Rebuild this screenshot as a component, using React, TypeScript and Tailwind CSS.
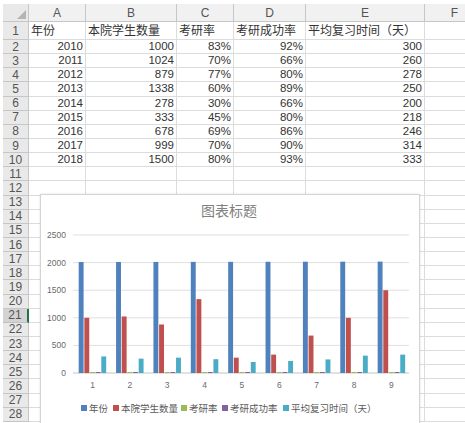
import React from "react";

type Row = [string, string, string, string, string];

const FONT = '"Liberation Sans", "Noto Sans CJK SC", sans-serif';

const header: Row = ["年份", "本院学生数量", "考研率", "考研成功率", "平均复习时间（天）"];

const data: Row[] = [
  ["2010", "1000", "83%", "92%", "300"],
  ["2011", "1024", "70%", "66%", "260"],
  ["2012", "879", "77%", "80%", "278"],
  ["2013", "1338", "60%", "89%", "250"],
  ["2014", "278", "30%", "66%", "200"],
  ["2015", "333", "45%", "80%", "218"],
  ["2016", "678", "69%", "86%", "246"],
  ["2017", "999", "70%", "90%", "314"],
  ["2018", "1500", "80%", "93%", "333"],
];

const columns = [
  { label: "A", cls: "w-[57px]" },
  { label: "B", cls: "w-[91px]" },
  { label: "C", cls: "w-[57px]" },
  { label: "D", cls: "w-[72px]" },
  { label: "E", cls: "w-[119px]" },
  { label: "F", cls: "w-[60px]" },
];

const seriesColors = ["#4f81bd", "#c0504d", "#9bbb59", "#8064a2", "#4bacc6"];

const legend = [
  { x: 81, label: "年份" },
  { x: 113, label: "本院学生数量" },
  { x: 181, label: "考研率" },
  { x: 222, label: "考研成功率" },
  { x: 283, label: "平均复习时间（天）" },
];

function RowHead({ n, active }: { n: number; active?: boolean }) {
  return (
    <div
      className={`flex w-[26px] shrink-0 items-center justify-center border-b border-r text-[12px] text-[#555] ${
        active
          ? "border-r-2 border-b-[#c0c0c0] border-r-[#217346] bg-[#d3d3d3]"
          : "border-[#c6c6c6] bg-[#e9e9e9]"
      }`}
    >
      {n}
    </div>
  );
}

function Chart() {
  const y0 = 373;
  const k = 138 / 2500;
  const ticks = [0, 500, 1000, 1500, 2000, 2500];

  return (
    <div className="absolute left-[40px] top-[194px] h-[232px] w-[380px] border border-[#d4d4d4] bg-white shadow-[0_0_2px_rgba(0,0,0,0.12)]">
      <svg width={378} height={230} viewBox="41 195 378 230" style={{ fontFamily: FONT }}>
        <text x={229} y={216} textAnchor="middle" fontSize={14} fill="#808080">
          图表标题
        </text>

        {ticks.map((t) => {
          const y = y0 - t * k;
          return (
            <g key={t}>
              <line x1={73} x2={409} y1={y} y2={y} stroke={t === 0 ? "#c4c4c4" : "#e0e0e0"} strokeWidth={1} />
              <text x={66} y={y + 3} textAnchor="end" fontSize={8.5} fill="#6a6a6a">
                {t}
              </text>
            </g>
          );
        })}

        {data.map((r, i) => {
          const values = [
            Number(r[0]),
            Number(r[1]),
            parseFloat(r[2]) / 100,
            parseFloat(r[3]) / 100,
            Number(r[4]),
          ];
          const left = 78.7 + i * 37.37;
          return (
            <g key={i}>
              {values.map((v, s) => {
                const h = Math.max(v * k, 1);
                return (
                  <rect
                    key={s}
                    x={left + s * 5.65}
                    y={y0 - h}
                    width={4.9}
                    height={h}
                    fill={seriesColors[s]}
                  />
                );
              })}
              <text x={left + 13.8} y={388} textAnchor="middle" fontSize={8.5} fill="#6a6a6a">
                {i + 1}
              </text>
            </g>
          );
        })}

        {legend.map((l, s) => (
          <g key={l.label}>
            <rect x={l.x} y={405} width={6} height={6} fill={seriesColors[s]} />
            <text x={l.x + 8} y={412} fontSize={9.5} fill="#5a5a5a">
              {l.label}
            </text>
          </g>
        ))}
      </svg>
    </div>
  );
}

export default function App() {
  const rows: (Row | null)[] = [header, ...data];
  while (rows.length < 28) rows.push(null);

  return (
    <div
      className="relative h-[423px] w-[465px] overflow-hidden bg-white pl-[3px] pt-[4px] text-[#333]"
      style={{ fontFamily: FONT }}
    >
      <div className="flex h-[18px]">
        <div className="relative w-[26px] shrink-0 border-b border-r border-[#c6c6c6] bg-[#e9e9e9]">
          <div className="absolute bottom-[2px] right-[2px] h-0 w-0 border-b-[9px] border-l-[9px] border-b-[#b4b4b4] border-l-transparent" />
        </div>
        {columns.map((c) => (
          <div
            key={c.label}
            className={`${c.cls} flex shrink-0 items-center justify-center border-b border-r border-[#c6c6c6] bg-[#f1f1f1] text-[12px] text-[#555]`}
          >
            {c.label}
          </div>
        ))}
      </div>

      {rows.map((r, idx) => {
        const isHead = idx === 0;
        return (
          <div key={idx} className={`flex ${isHead ? "h-[18px]" : "h-[14.15px]"}`}>
            <RowHead n={idx + 1} active={idx === 20} />
            {columns.map((c, ci) => {
              const val = r && ci < 5 ? r[ci] : "";
              return (
                <div
                  key={c.label}
                  className={`${c.cls} flex shrink-0 items-center overflow-visible whitespace-nowrap border-b border-r border-[#dcdcdc] px-[2px] ${
                    isHead ? "justify-start text-[12px]" : "justify-end text-[11.5px]"
                  }`}
                >
                  {val}
                </div>
              );
            })}
          </div>
        );
      })}

      <Chart />
    </div>
  );
}
